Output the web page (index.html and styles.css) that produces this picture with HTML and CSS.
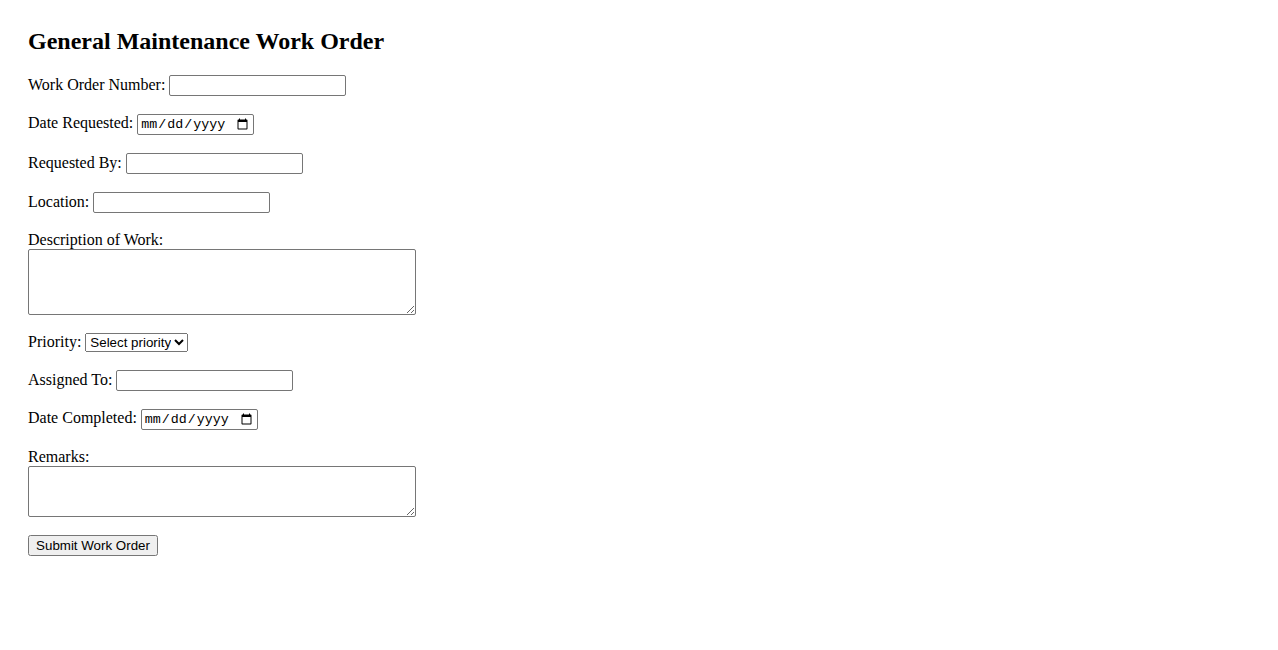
FILE: index.html
```html
<!DOCTYPE html>
<html lang="en">
<head>
<meta charset="utf-8">
<title>General Maintenance Work Order</title>
<link rel="stylesheet" href="styles.css">
</head>
<body>
<div class="page">
  <h2 class="title">General Maintenance Work Order</h2>
  <form class="form">
    <div class="field">
      <label for="won">Work Order Number:</label>
      <input class="text-input" type="text" id="won">
    </div>
    <div class="field">
      <label for="dr">Date Requested:</label>
      <input class="date-input" type="date" id="dr">
    </div>
    <div class="field">
      <label for="rb">Requested By:</label>
      <input class="text-input" type="text" id="rb">
    </div>
    <div class="field">
      <label for="loc">Location:</label>
      <input class="text-input" type="text" id="loc">
    </div>
    <div class="field">
      <label for="desc">Description of Work:</label>
      <textarea class="area area-4" id="desc" rows="4"></textarea>
    </div>
    <div class="field">
      <label for="pri">Priority:</label>
      <select class="select" id="pri">
        <option>Select priority</option>
        <option>Low</option>
        <option>Medium</option>
        <option>High</option>
      </select>
    </div>
    <div class="field">
      <label for="at">Assigned To:</label>
      <input class="text-input" type="text" id="at">
    </div>
    <div class="field">
      <label for="dc">Date Completed:</label>
      <input class="date-input" type="date" id="dc">
    </div>
    <div class="field">
      <label for="rem">Remarks:</label>
      <textarea class="area area-3" id="rem" rows="3"></textarea>
    </div>
    <div class="field">
      <button class="submit" type="submit">Submit Work Order</button>
    </div>
  </form>
</div>
</body>
</html>
```

FILE: styles.css
```css
html, body {
  margin: 0;
  background: #fff;
}
body {
  font-family: "Liberation Serif", "Times New Roman", serif;
  font-size: 16px;
  color: #000;
}
.page {
  padding: 28px;
}
.title {
  margin: 0 0 20px;
  font-size: 24px;
  font-weight: bold;
}
.field {
  margin: 0 0 18px;
}
.text-input {
  box-sizing: border-box;
  width: 177px;
  height: 21px;
  font-family: "Liberation Sans", Arial, sans-serif;
  font-size: 13.333px;
  border: 1px solid #767676;
  border-radius: 2px;
  padding: 1px 2px;
}
.date-input {
  box-sizing: border-box;
  width: 117px;
  height: 21px;
  font-family: "Liberation Mono", "Courier New", monospace;
  font-size: 13.333px;
  border: 1px solid #767676;
  border-radius: 2px;
  padding: 1px 2px;
}
.area {
  display: block;
  box-sizing: border-box;
  width: 388px;
  margin: 0;
  font-family: "Liberation Mono", monospace;
  font-size: 13.333px;
  border: 1px solid #767676;
  border-radius: 2px;
  padding: 2px;
}
.area-4 { height: 66px; }
.area-3 { height: 51px; }
.select {
  box-sizing: border-box;
  width: 103px;
  height: 19px;
  font-family: "Liberation Sans", Arial, sans-serif;
  font-size: 13.333px;
}
.submit {
  box-sizing: border-box;
  width: 130px;
  height: 21px;
  font-family: "Liberation Sans", Arial, sans-serif;
  font-size: 13.333px;
}
```
